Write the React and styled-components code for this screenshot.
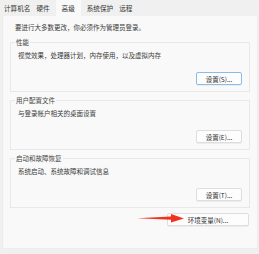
import React from "react";
import styled, { createGlobalStyle } from "styled-components";

const GlobalStyle = createGlobalStyle`
  html, body {
    margin: 0;
    padding: 0;
    background: #f0f0f0;
  }
  body {
    font-family: "Noto Sans CJK SC", "Noto Sans", sans-serif;
    color: #3a3a3a;
  }
`;

const tabs = ["计算机名", "硬件", "高级", "系统保护", "远程"];

const groups = [
  { title: "性能", text: "视觉效果，处理器计划，内存使用，以及虚拟内存", button: "设置(S)...", focused: true },
  { title: "用户配置文件", text: "与登录帐户相关的桌面设置", button: "设置(E)..." },
  { title: "启动和故障恢复", text: "系统启动、系统故障和调试信息", button: "设置(T)..." },
];

export default function App() {
  return (
    <Window>
      <GlobalStyle />
      <TabBar>
        {tabs.map((t) => (
          <Tab key={t} $active={t === "高级"}>
            {t}
          </Tab>
        ))}
      </TabBar>
      <Panel>
        <Intro>要进行大多数更改，你必须作为管理员登录。</Intro>
        {groups.map((g) => (
          <Group key={g.title}>
            <Legend>{g.title}</Legend>
            <Desc>{g.text}</Desc>
            <ButtonRow>
              <Button $focused={g.focused}>{g.button}</Button>
            </ButtonRow>
          </Group>
        ))}
        <EnvRow>
          <Arrow width="47" height="10" viewBox="0 0 47 10">
            <path d="M0 5.2 L34 3.6 L34 1 L47 5.4 L34 9.4 L34 6.8 Z" fill="#f2321f" />
          </Arrow>
          <Button $wide>环境变量(N)...</Button>
        </EnvRow>
      </Panel>
    </Window>
  );
}

const Window = styled.div`
  width: 259px;
  height: 254px;
  overflow: hidden;
  background: #f0f0f0;
`;

const TabBar = styled.div`
  display: flex;
  align-items: flex-end;
  height: 16px;
  padding-left: 1px;
  font-size: 6.6px;
  line-height: 10px;
`;

const Tab = styled.div`
  padding: ${(p) => (p.$active ? "3px 6px 3px" : "3px 3px")};
  margin: ${(p) => (p.$active ? "0 3px" : "0")};
  background: ${(p) => (p.$active ? "#f9f9f9" : "transparent")};
  color: #333;
  white-space: nowrap;
`;

const Panel = styled.div`
  position: relative;
  box-sizing: border-box;
  height: 233px;
  margin: 0 1px 0 2px;
  padding: 6px 7px 0 7px;
  background: #f9f9f9;
  border: 1px solid #ececec;
  border-top: none;
  font-size: 6.5px;
  line-height: 10px;
`;

const Intro = styled.div`
  padding-left: 5px;
  margin-bottom: 5px;
  white-space: nowrap;
`;

const Group = styled.fieldset`
  margin: 0 0 3px 0;
  padding: 3px 7px 6px 7px;
  border: 1px solid #e8e8e8;
  min-width: 0;
`;

const Legend = styled.legend`
  padding: 0 1px;
  margin-left: -3px;
  color: #444;
`;

const Desc = styled.div`
  white-space: nowrap;
`;

const ButtonRow = styled.div`
  display: flex;
  justify-content: flex-end;
  margin-top: 12px;
`;

const Button = styled.div`
  box-sizing: border-box;
  width: ${(p) => (p.$wide ? "82px" : "46px")};
  height: 13px;
  display: flex;
  align-items: center;
  justify-content: center;
  background: #fdfdfd;
  border: 1px solid ${(p) => (p.$focused ? "#8dbbe8" : "#dedede")};
  border-radius: 2px;
  box-shadow: 0 1px 0 rgba(0, 0, 0, 0.05);
  font-size: 6.5px;
  color: #2a2a2a;
  white-space: nowrap;
`;

const EnvRow = styled.div`
  position: relative;
  display: flex;
  justify-content: flex-end;
  margin-top: 5px;
  padding-right: 1px;
`;

const Arrow = styled.svg`
  position: absolute;
  left: 127px;
  top: 0px;
  z-index: 1;
`;
